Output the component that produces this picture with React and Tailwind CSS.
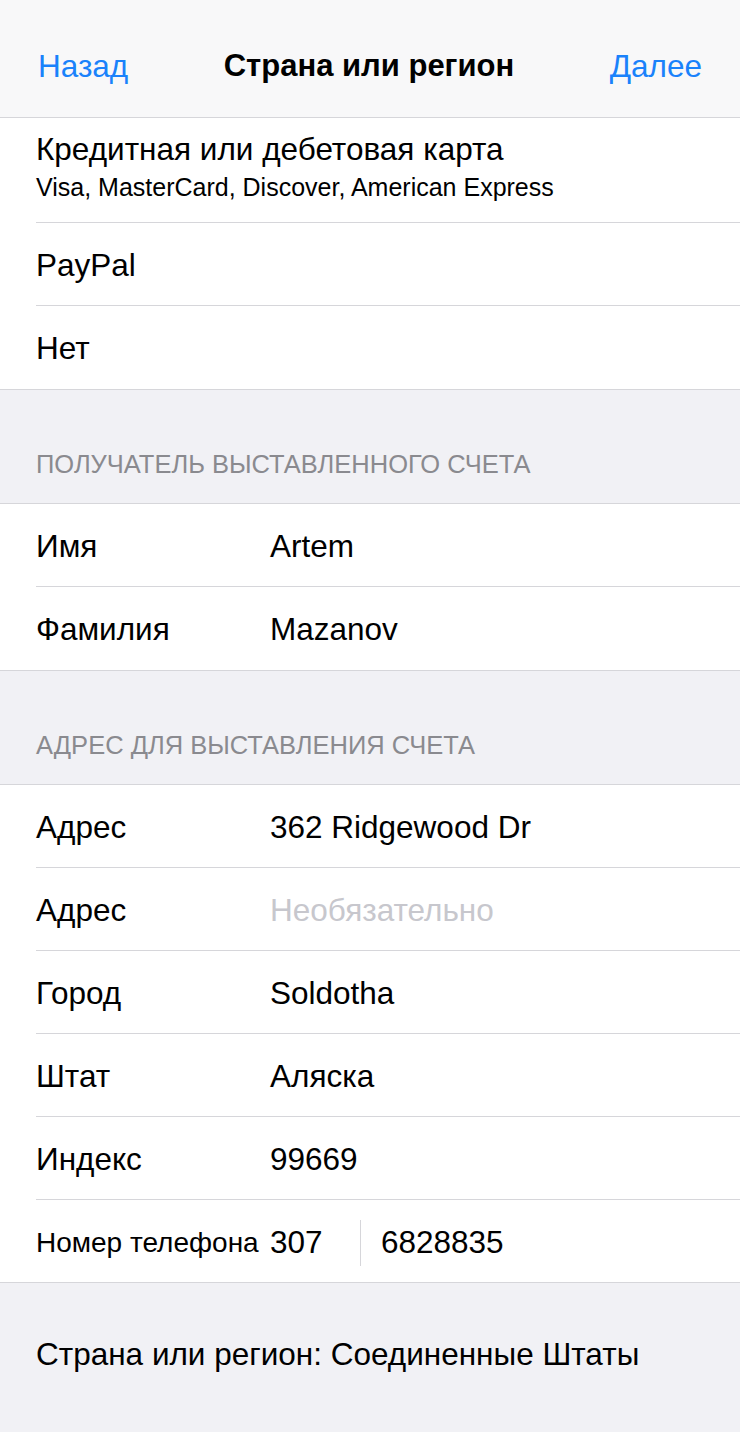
import React from 'react';

const font = { fontFamily: '"Liberation Sans", Arial, sans-serif' };

function Row({ label, value, placeholder, last }) {
  return (
    <div className="pl-[36px] bg-white">
      <div className={`h-[83px] flex items-center pt-[3px] ${last ? '' : 'border-b border-[#d6d6da]'}`}>
        <span className="w-[234px] text-[31.5px] text-black">{label}</span>
        {placeholder ? (
          <span className="text-[31.5px] text-[#c7c7cd]">{placeholder}</span>
        ) : (
          <span className="text-[31.5px] text-black">{value}</span>
        )}
      </div>
    </div>
  );
}

function SectionHeader({ children }) {
  return (
    <div className="h-[114px] bg-[#f1f1f5] border-b border-[#d6d6da] flex items-end pb-[20px] pl-[36px]">
      <span className="text-[25.5px] text-[#8a8a8f] uppercase">{children}</span>
    </div>
  );
}

export default function App() {
  return (
    <div className="w-[740px] min-h-[1432px] bg-[#f1f1f5] overflow-hidden" style={font}>
      {/* Nav bar */}
      <div className="h-[118px] bg-[#f8f8f9] border-b border-[#d6d6da] flex items-center justify-between px-[38px] pt-[16px]">
        <span className="text-[31.5px] text-[#1a82fb]">Назад</span>
        <span className="text-[31px] font-bold text-black">Страна или регион</span>
        <span className="text-[31.5px] text-[#1a82fb]">Далее</span>
      </div>

      {/* Payment */}
      <div className="bg-white border-b border-[#d6d6da]">
        <div className="pl-[36px]">
          <div className="h-[105px] border-b border-[#d6d6da] flex flex-col justify-center pb-[4px]">
            <span className="text-[31.5px] text-black leading-[38px]">Кредитная или дебетовая карта</span>
            <span className="text-[25px] text-black leading-[38px]">Visa, MasterCard, Discover, American Express</span>
          </div>
        </div>
        <Row label="PayPal" />
        <Row label="Нет" last />
      </div>

      <SectionHeader>Получатель выставленного счета</SectionHeader>
      <div className="bg-white border-b border-[#d6d6da]">
        <Row label="Имя" value="Artem" />
        <Row label="Фамилия" value="Mazanov" last />
      </div>

      <SectionHeader>Адрес для выставления счета</SectionHeader>
      <div className="bg-white border-b border-[#d6d6da]">
        <Row label="Адрес" value="362 Ridgewood Dr" />
        <Row label="Адрес" placeholder="Необязательно" />
        <Row label="Город" value="Soldotha" />
        <Row label="Штат" value="Аляска" />
        <Row label="Индекс" value="99669" />
        <div className="pl-[36px]">
          <div className="h-[82px] flex items-center pt-[4px]">
            <span className="w-[234px] text-[28px] text-black whitespace-nowrap">Номер телефона</span>
            <span className="w-[90px] text-[31.5px] text-black">307</span>
            <div className="w-px h-[46px] bg-[#d6d6da]" />
            <span className="ml-[20px] text-[31.5px] text-black">6828835</span>
          </div>
        </div>
      </div>

      <div className="pl-[36px] pt-[48px]">
        <span className="text-[31.5px] text-black">Страна или регион: Соединенные Штаты</span>
      </div>
    </div>
  );
}
